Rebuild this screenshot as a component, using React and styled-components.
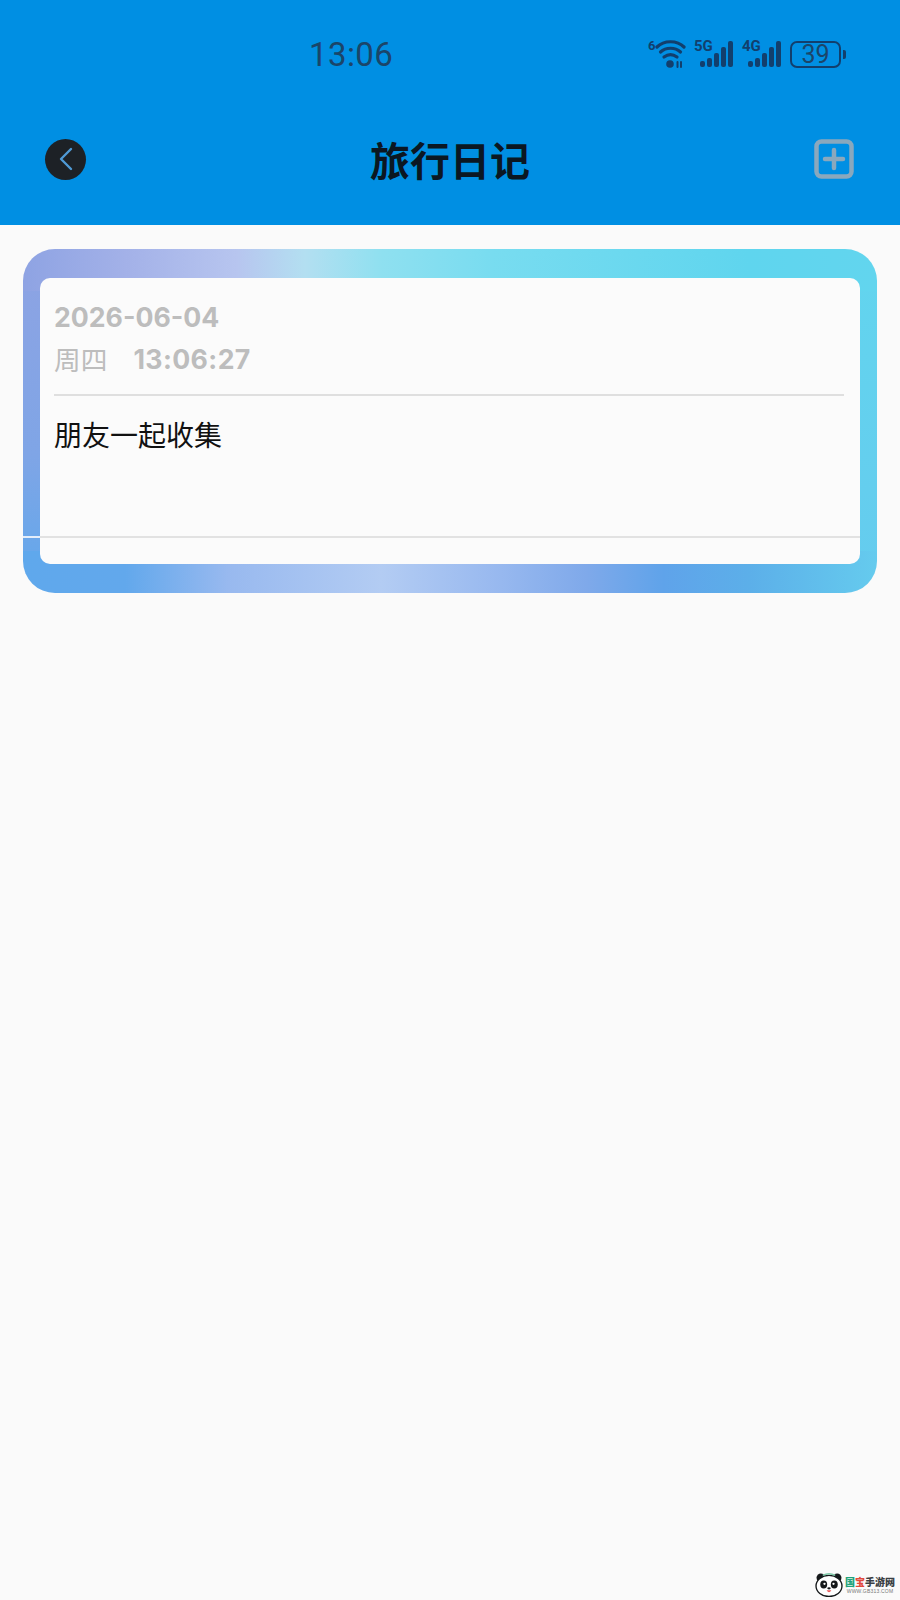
import styled, { createGlobalStyle } from "styled-components";

const GlobalStyle = createGlobalStyle`
  html, body {
    margin: 0;
    padding: 0;
    background: #fafafa;
    font-family: "Inter", "Noto Sans CJK SC", sans-serif;
  }
`;

const Page = styled.div`
  position: relative;
  width: 900px;
  height: 1600px;
  overflow: hidden;
  background: #fafafa;
`;

const Header = styled.header`
  height: 225px;
  background: #008fe3;
  display: flex;
  flex-direction: column;
`;

const StatusBar = styled.div`
  height: 108px;
  padding: 0 54px 0 309px;
  box-sizing: border-box;
  display: flex;
  align-items: center;
  justify-content: space-between;
`;

const Clock = styled.span`
  font-family: "Roboto", sans-serif;
  font-size: 33px;
  line-height: 1;
  letter-spacing: 0.4px;
  color: #1b4569;
`;

const StatusIcons = styled.div`
  display: flex;
  align-items: center;
  gap: 8px;
`;

const Signal = styled.div`
  position: relative;
  width: 40px;
  height: 28px;
`;

const NetLabel = styled.span`
  position: absolute;
  left: 0;
  top: -1px;
  font-family: "Roboto", sans-serif;
  font-size: 15px;
  font-weight: 700;
  line-height: 15px;
  color: #123f6d;
`;

const Battery = styled.div`
  display: flex;
  align-items: center;
  gap: 2px;
`;

const BatteryBody = styled.div`
  width: 51px;
  height: 27px;
  box-sizing: border-box;
  border: 2.5px solid #123f6d;
  border-radius: 7px;
  display: flex;
  align-items: center;
  justify-content: center;
  font-family: "Roboto", sans-serif;
  font-size: 25px;
  color: #1b4569;
`;

const BatteryNub = styled.div`
  width: 3px;
  height: 9px;
  border-radius: 0 2px 2px 0;
  background: #123f6d;
`;

const NavBar = styled.div`
  flex: 1;
  padding: 0 46px 15px 45px;
  display: flex;
  align-items: center;
  justify-content: space-between;
`;

const BackButton = styled.button`
  width: 41px;
  height: 41px;
  padding: 0;
  border: 0;
  border-radius: 50%;
  background: #1d2126;
  display: flex;
  align-items: center;
  justify-content: center;
`;

const Title = styled.h1`
  margin: 0;
  font-family: "Noto Sans CJK SC", sans-serif;
  font-size: 40px;
  font-weight: 700;
  line-height: 1;
  color: #0b1722;
`;

const AddButton = styled.button`
  width: 40px;
  height: 40px;
  padding: 0;
  border: 0;
  background: none;
  display: flex;
`;

const Content = styled.main`
  padding: 24px 23px 0;
`;

const Card = styled.section`
  height: 344px;
  box-sizing: border-box;
  padding: 29px 17px;
  border-radius: 32px;
  background-repeat: no-repeat;
  background-size: 100% 42px, 100% 42px, 17px 100%, 17px 100%;
  background-position: top left, bottom left, left top, right top;
  background-image:
    linear-gradient(
      to right,
      #8ea3e3 0%,
      #a3b1e8 12%,
      #b7c5ef 25%,
      #b3dff1 33%,
      #8fe0f0 42%,
      #78dcf0 55%,
      #5fd5ee 85%,
      #62d5ee 100%
    ),
    linear-gradient(
      to right,
      #5fa8ec 0%,
      #62a8ec 12%,
      #98b9ef 24%,
      #b3ccf3 42%,
      #97b8ef 56%,
      #7fa9ea 66%,
      #5fa3ea 75%,
      #5cafe9 85%,
      #65cbee 100%
    ),
    linear-gradient(to bottom, #8ea3e3 0%, #7fa5e6 60%, #5fa8ec 100%),
    linear-gradient(to bottom, #62d5ee 0%, #65cbee 100%);
`;

const Panel = styled.div`
  height: 100%;
  box-sizing: border-box;
  border-radius: 10px;
  background: #fbfbfb;
  display: flex;
  flex-direction: column;
`;

const Body = styled.div`
  flex: 1;
  padding: 18px 16px 0 14px;
`;

const DateBlock = styled.div`
  padding-bottom: 13px;
  border-bottom: 2px solid #dfdfdf;
  color: #bdbdbd;
`;

const DateLine = styled.div`
  height: 42.5px;
  display: flex;
  align-items: center;
  gap: 26px;
  font-family: "Inter", "Noto Sans CJK SC", sans-serif;
  font-size: 26.7px;
  font-weight: 700;
  line-height: 1;
`;

const Weekday = styled.span`
  font-family: "Noto Sans CJK SC", sans-serif;
  font-weight: 400;
`;

const Time = styled.span`
  letter-spacing: 0.4px;
`;

const Note = styled.p`
  margin: 18px 0 0;
  font-family: "Noto Sans CJK SC", sans-serif;
  font-size: 28px;
  line-height: 40px;
  color: #111;
`;

const CardFooter = styled.div`
  position: relative;
  height: 26px;
  border-top: 2px solid #e2e2e2;

  &::before {
    content: "";
    position: absolute;
    left: -17px;
    top: -2px;
    width: 17px;
    height: 2px;
    background: #e4eefb;
  }
`;

const Watermark = styled.div`
  position: absolute;
  right: 5px;
  bottom: 3px;
  display: flex;
  align-items: center;
  gap: 2px;
`;

const BrandText = styled.div`
  display: flex;
  flex-direction: column;
  align-items: center;
`;

const BrandName = styled.div`
  font-family: "Noto Sans CJK SC", sans-serif;
  font-size: 10px;
  font-weight: 900;
  line-height: 13px;
  color: #3a3f44;
  white-space: nowrap;
`;

const BrandAccent = styled.span`
  color: ${(p) => p.$color};
`;

const BrandUrl = styled.div`
  font-family: "Liberation Sans", sans-serif;
  font-size: 5px;
  line-height: 7px;
  color: #777;
  letter-spacing: 0.2px;
`;

const bars = [6, 9, 14, 20, 26];

function Bars() {
  return (
    <svg width="40" height="28" viewBox="0 0 40 28">
      {bars.map((h, i) => (
        <rect
          key={i}
          x={6 + i * 7}
          y={27 - h}
          width="5"
          height={h}
          rx="2"
          fill="#123f6d"
        />
      ))}
    </svg>
  );
}

function WifiIcon() {
  return (
    <svg width="38" height="30" viewBox="0 0 38 30" fill="none" stroke="#123f6d" strokeWidth="3.2" strokeLinecap="round">
      <text x="0" y="11" fontFamily="Roboto, sans-serif" fontSize="13" fontWeight="700" fill="#123f6d" stroke="none">6</text>
      <path d="M9 8 C16 1 29 1 36 8" />
      <path d="M12.5 13 C18 8 27 8 32.5 13" />
      <path d="M16 18 C20 15 25 15 29 18" />
      <circle cx="22" cy="25" r="3.8" fill="#123f6d" stroke="none" />
      <path d="M29.5 23 V28 M33 23 V28" strokeWidth="2" />
    </svg>
  );
}

function Panda() {
  return (
    <svg width="28" height="25" viewBox="0 0 29 26">
      <circle cx="6" cy="6" r="4.5" fill="#15181a" />
      <circle cx="23" cy="6" r="4.5" fill="#15181a" />
      <ellipse cx="14.5" cy="14.5" rx="13.5" ry="11" fill="#fff" stroke="#15181a" strokeWidth="1.4" />
      <ellipse cx="9" cy="13" rx="3.6" ry="4.2" fill="#15181a" />
      <ellipse cx="20" cy="13" rx="3.6" ry="4.2" fill="#15181a" />
      <circle cx="9.8" cy="12.3" r="1.2" fill="#fff" />
      <circle cx="19.2" cy="12.3" r="1.2" fill="#fff" />
      <ellipse cx="14.5" cy="17" rx="1.8" ry="1.1" fill="#15181a" />
      <path d="M12 19 Q14.5 23 17 19 Z" fill="#ec5a5a" />
      <path d="M8 3.5 Q14.5 0 21 3.5" fill="none" stroke="#7ec8a8" strokeWidth="1.6" />
    </svg>
  );
}

export default function App() {
  return (
    <Page>
      <GlobalStyle />
      <Header>
        <StatusBar>
          <Clock>13:06</Clock>
          <StatusIcons>
            <WifiIcon />
            <Signal>
              <NetLabel>5G</NetLabel>
              <Bars />
            </Signal>
            <Signal>
              <NetLabel>4G</NetLabel>
              <Bars />
            </Signal>
            <Battery>
              <BatteryBody>39</BatteryBody>
              <BatteryNub />
            </Battery>
          </StatusIcons>
        </StatusBar>
        <NavBar>
          <BackButton aria-label="back">
            <svg width="16" height="24" viewBox="0 0 16 24" fill="none" stroke="#4f9ad6" strokeWidth="2.4" strokeLinecap="round" strokeLinejoin="round">
              <path d="M13 2 L3 12 L13 22" />
            </svg>
          </BackButton>
          <Title>旅行日记</Title>
          <AddButton aria-label="add">
            <svg width="40" height="40" viewBox="0 0 40 40" fill="none" stroke="#8aa8bd" strokeLinecap="round">
              <rect x="2.5" y="2.5" width="35" height="35" rx="5" strokeWidth="4.5" />
              <path d="M20 11 V29 M11 20 H29" strokeWidth="4.5" />
            </svg>
          </AddButton>
        </NavBar>
      </Header>
      <Content>
        <Card>
          <Panel>
            <Body>
              <DateBlock>
                <DateLine>2026-06-04</DateLine>
                <DateLine>
                  <Weekday>周四</Weekday>
                  <Time>13:06:27</Time>
                </DateLine>
              </DateBlock>
              <Note>朋友一起收集</Note>
            </Body>
            <CardFooter />
          </Panel>
        </Card>
      </Content>
      <Watermark>
        <Panda />
        <BrandText>
          <BrandName>
            <BrandAccent $color="#1fa37a">国</BrandAccent>
            <BrandAccent $color="#e2493c">宝</BrandAccent>
            手游网
          </BrandName>
          <BrandUrl>WWW.GB313.COM</BrandUrl>
        </BrandText>
      </Watermark>
    </Page>
  );
}
